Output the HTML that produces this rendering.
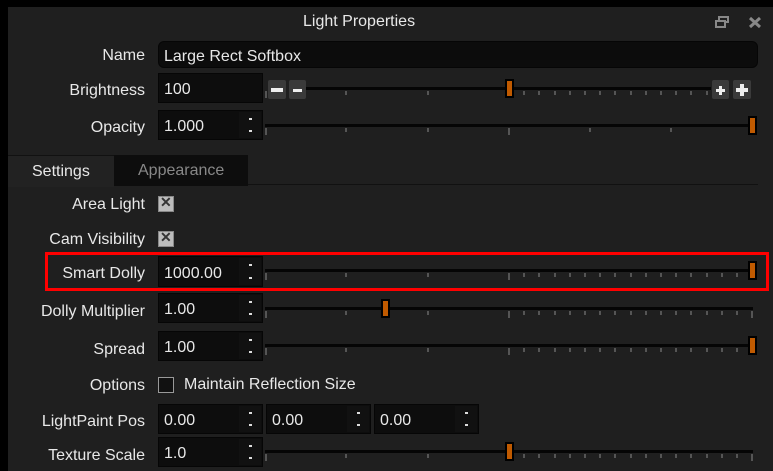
<!DOCTYPE html><html><head><style>
body{margin:0;width:773px;height:471px;background:#000;overflow:hidden;font-family:"Liberation Sans",sans-serif;font-size:16px;color:#e8e8e8;position:relative}
#p{position:absolute;left:8px;top:7px;width:765px;height:464px;background:#1f1f1f}
.a{position:absolute}
.lbl{position:absolute;right:628px;text-align:right;white-space:nowrap}
.in{position:absolute;background:#0d0d0d;border:1px solid #060606;box-sizing:border-box}
.in span{position:absolute;left:5px;top:50%;transform:translateY(-38%)}
.sp{position:absolute;right:1px;top:1px;bottom:1px;width:22px;background:#111}
.sp:before{content:"";position:absolute;left:10px;top:6px;width:3px;height:2px;background:#ddd}
.sp:after{content:"";position:absolute;left:10px;bottom:6px;width:3px;height:2px;background:#ddd}
.tr{position:absolute;height:3px;background:#050505}
.tk{position:absolute;width:2px;background:#555}
.h{position:absolute;width:5px;height:15px;background:#c05a00;border:2px solid #000}
.cb{position:absolute;width:16px;height:16px;background:#bcbcbc;border:1px solid #888;box-sizing:border-box}
.cb:after{content:"✕";position:absolute;left:1px;top:-3px;font-size:14px;font-weight:bold;color:#333}
.btn{position:absolute;width:18px;height:19px;background:#3a3a3a;border-radius:2px}
.btn i{position:absolute;background:#eee}
</style></head><body>
<div id="p"></div>
<div class="a" style="left:303px;top:13px;">Light Properties</div>
<svg class="a" style="left:715px;top:16px" width="14" height="12"><rect x="4" y="1" width="9" height="5" fill="none" stroke="#888" stroke-width="2"/><rect x="1" y="5" width="9" height="6" fill="#1f1f1f" stroke="#888" stroke-width="2"/></svg>
<svg class="a" style="left:748px;top:16px" width="14" height="13"><path d="M2 2L12 11M12 2L2 11" stroke="#888" stroke-width="3"/></svg>

<div class="lbl" style="top:47px">Name</div>
<div class="in" style="left:158px;top:41px;width:600px;height:27px;border-radius:6px;background:#0c0c0c"><span>Large Rect Softbox</span></div>

<div class="lbl" style="top:82px">Brightness</div>
<div class="in" style="left:158px;top:73px;width:105px;height:30px"><span>100</span></div>
<div class="btn" style="left:268px;top:80px"><i style="left:3px;top:8px;width:12px;height:4px"></i></div>
<div class="btn" style="left:289px;top:80px;width:17px"><i style="left:4px;top:9px;width:9px;height:3px"></i></div>
<div class="btn" style="left:712px;top:80px;width:17px"><i style="left:4px;top:9px;width:9px;height:3px"></i><i style="left:7px;top:6px;width:3px;height:9px"></i></div>
<div class="btn" style="left:733px;top:80px"><i style="left:3px;top:8px;width:12px;height:4px"></i><i style="left:7px;top:4px;width:4px;height:12px"></i></div>

<div class="lbl" style="top:119px">Opacity</div>
<div class="in" style="left:158px;top:110px;width:105px;height:30px"><span>1.000</span><div class="sp"></div></div>

<div class="a" style="left:8px;top:155px;width:106px;height:31px;background:#222;border-top:1px solid #111"></div>
<div class="a" style="left:114px;top:155px;width:134px;height:31px;background:#0d0d0d"></div>
<div class="a" style="left:32px;top:163px">Settings</div>
<div class="a" style="left:138px;top:162px;color:#888">Appearance</div>
<div class="a" style="left:248px;top:184px;width:510px;height:1px;background:#111"></div>

<div class="lbl" style="top:196px">Area Light</div><div class="cb" style="left:158px;top:196px"></div>
<div class="lbl" style="top:231px">Cam Visibility</div><div class="cb" style="left:158px;top:231px"></div>

<div class="lbl" style="top:265px">Smart Dolly</div>
<div class="in" style="left:158px;top:256px;width:105px;height:31px"><span>1000.00</span><div class="sp"></div></div>
<div class="a" style="left:45px;top:252px;width:718px;height:33px;border:3px solid #f00"></div>

<div class="lbl" style="top:303px">Dolly Multiplier</div>
<div class="in" style="left:158px;top:293px;width:105px;height:30px"><span>1.00</span><div class="sp"></div></div>
<div class="lbl" style="top:341px">Spread</div>
<div class="in" style="left:158px;top:331px;width:105px;height:30px"><span>1.00</span><div class="sp"></div></div>

<div class="lbl" style="top:377px">Options</div>
<div class="a" style="left:158px;top:377px;width:16px;height:16px;border:1px solid #999;background:#111;box-sizing:border-box"></div>
<div class="a" style="left:184px;top:376px">Maintain Reflection Size</div>

<div class="lbl" style="top:413px">LightPaint Pos</div>
<div class="in" style="left:158px;top:404px;width:105px;height:30px"><span>0.00</span><div class="sp"></div></div>
<div class="in" style="left:266px;top:404px;width:105px;height:30px"><span>0.00</span><div class="sp"></div></div>
<div class="in" style="left:374px;top:404px;width:105px;height:30px"><span>0.00</span><div class="sp"></div></div>

<div class="lbl" style="top:447px">Texture Scale</div>
<div class="in" style="left:158px;top:437px;width:105px;height:30px"><span>1.0</span><div class="sp"></div></div>
<div id="s"></div>
<script>
var s='';
function sl(x1,x2,y,hx,minor){
 s+='<div class="tr" style="left:'+x1+'px;top:'+y+'px;width:'+(x2-x1)+'px"></div>';
 var t=[266,346,428,509];
 if(minor){for(var i=0;i<16;i++)t.push(509+(i+1)*15.2);}else{t.push(590,671,752);}
 t.forEach(function(x){if(x<=x2+1){var big=(x==266||x==509||x>=751);s+='<div class="tk" style="left:'+Math.round(x-1)+'px;top:'+(y+4)+'px;height:'+(big?7:4)+'px"></div>';}});
 if(hx)s+='<div class="h" style="left:'+(hx-4)+'px;top:'+(y-8)+'px"></div>';
}
sl(306,711,87,509,1);
sl(265,753,124,752,0);
sl(265,753,269,752,1);
sl(265,753,307,385,1);
sl(265,753,344,752,1);
sl(265,753,450,509,1);
document.getElementById('s').innerHTML=s;
</script>
</body></html>
